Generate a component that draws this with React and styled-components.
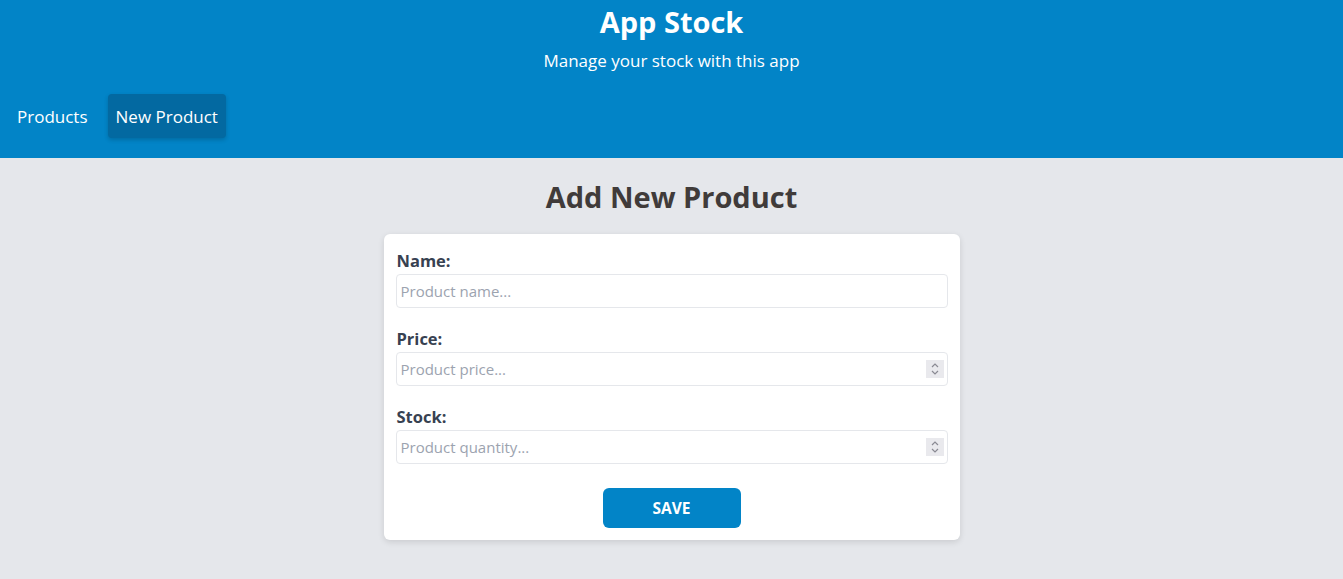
import React from "react";
import styled, { createGlobalStyle } from "styled-components";

const Global = createGlobalStyle`
  * { box-sizing: border-box; }
  body {
    margin: 0;
    background: #e5e7eb;
    font-family: "Open Sans", "Noto Sans", sans-serif;
  }
  input[type=number]::-webkit-inner-spin-button,
  input[type=number]::-webkit-outer-spin-button { -webkit-appearance: none; margin: 0; }
  input[type=number] { -moz-appearance: textfield; }
`;

const Header = styled.header`
  background: #0284c7;
  color: #fff;
  padding: 4px 0 20px;
`;

const Title = styled.h1`
  margin: 0;
  text-align: center;
  font-size: 29px;
  line-height: 36px;
  font-weight: 700;
`;

const Subtitle = styled.p`
  margin: 9px 0 0;
  text-align: center;
  font-size: 17px;
  line-height: 24px;
`;

const Nav = styled.nav`
  display: flex;
  gap: 12px;
  padding: 0 9px;
  margin-top: 21px;
`;

const NavLink = styled.a`
  display: flex;
  align-items: center;
  height: 44px;
  padding: 0 8px;
  border-radius: 4px;
  font-size: 17px;
  color: #fff;
  text-decoration: none;
  cursor: pointer;
  background: ${(p) => (p.$active ? "#0369a1" : "transparent")};
  box-shadow: ${(p) => (p.$active ? "0 2px 4px rgba(0,0,0,0.18)" : "none")};
`;

const Main = styled.main`
  display: flex;
  flex-direction: column;
  align-items: center;
  padding: 21px 0 40px;
`;

const PageTitle = styled.h2`
  margin: 0 0 19px;
  font-size: 29px;
  line-height: 36px;
  font-weight: 700;
  color: #403b3a;
`;

const Card = styled.form`
  width: 576px;
  background: #fff;
  border-radius: 6px;
  box-shadow: 0 2px 6px rgba(0, 0, 0, 0.12);
  padding: 15px 12px 12px;
  display: flex;
  flex-direction: column;
`;

const Field = styled.div`
  display: flex;
  flex-direction: column;
  margin-bottom: 19px;
`;

const Label = styled.label`
  font-size: 16.5px;
  line-height: 24px;
  font-weight: 700;
  color: #374151;
  margin-bottom: 1px;
  padding-left: 1px;
`;

const InputWrap = styled.div`
  position: relative;
`;

const Input = styled.input`
  width: 100%;
  height: 34px;
  border: 1px solid #e5e7eb;
  border-radius: 4px;
  padding: 0 4px;
  font-family: inherit;
  font-size: 15px;
  color: #374151;
  outline: none;
  &::placeholder { color: #9ca3af; }
`;

const Spinner = styled.span`
  position: absolute;
  right: 4px;
  top: 8px;
  width: 18px;
  height: 18px;
  background: #e9e9ed;
  display: flex;
  align-items: center;
  justify-content: center;
  pointer-events: none;
`;

const SaveButton = styled.button`
  align-self: center;
  margin-top: 5px;
  width: 138px;
  height: 40px;
  border: none;
  border-radius: 6px;
  background: #0284c7;
  color: #fff;
  font-family: inherit;
  font-weight: 700;
  font-size: 15.5px;
  text-transform: uppercase;
  cursor: pointer;
`;

const SpinIcon = () => (
  <svg width="10" height="14" viewBox="0 0 10 14" fill="none" stroke="#8a8a93" strokeWidth="1.2">
    <path d="M2 5 L5 2 L8 5" />
    <path d="M2 9 L5 12 L8 9" />
  </svg>
);

const FormField = ({ label, placeholder, type = "text" }) => (
  <Field>
    <Label>{label}</Label>
    <InputWrap>
      <Input type={type} placeholder={placeholder} />
      {type === "number" && (
        <Spinner>
          <SpinIcon />
        </Spinner>
      )}
    </InputWrap>
  </Field>
);

export default function App() {
  return (
    <>
      <Global />
      <Header>
        <Title>App Stock</Title>
        <Subtitle>Manage your stock with this app</Subtitle>
        <Nav>
          <NavLink>Products</NavLink>
          <NavLink $active>New Product</NavLink>
        </Nav>
      </Header>
      <Main>
        <PageTitle>Add New Product</PageTitle>
        <Card onSubmit={(e) => e.preventDefault()}>
          <FormField label="Name:" placeholder="Product name..." />
          <FormField label="Price:" placeholder="Product price..." type="number" />
          <FormField label="Stock:" placeholder="Product quantity..." type="number" />
          <SaveButton type="submit">Save</SaveButton>
        </Card>
      </Main>
    </>
  );
}
